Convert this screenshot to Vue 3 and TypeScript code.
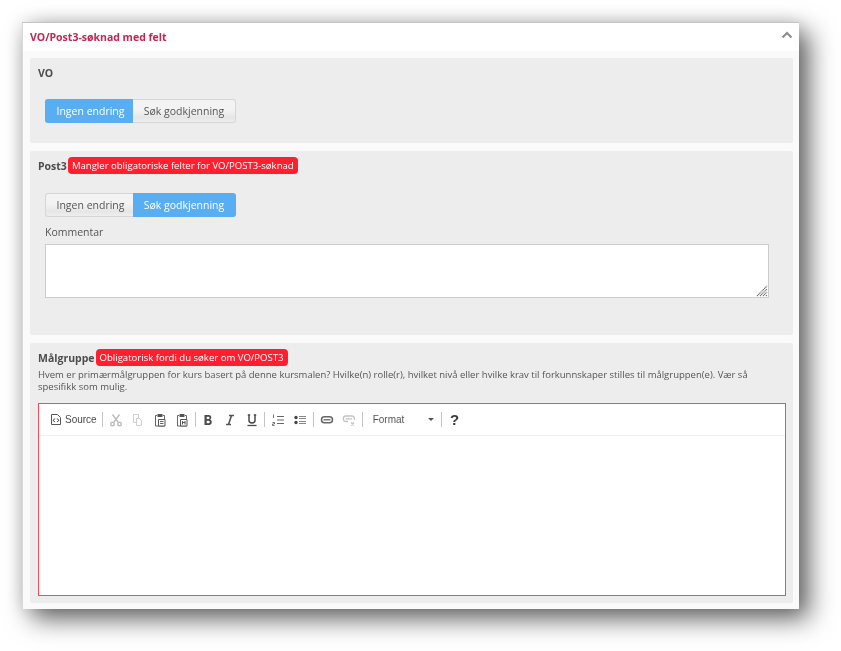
<script setup lang="ts">
const options = ['Ingen endring', 'Søk godkjenning']
</script>

<template>
  <div class="page">
    <div class="window">
      <header class="head">
        <span class="title">VO/Post3-søknad med felt</span>
        <svg class="chev" width="12" height="8" viewBox="0 0 12 8"><path d="M1.500 6.500 6 2l4.500 4.500" fill="none" stroke="#8f8f8f" stroke-width="2.200"/></svg>
      </header>
      <div class="body">
        <section class="sec sec-vo">
          <div class="label-row"><b>VO</b></div>
          <div class="group">
            <button class="btn">{{ options[0] }}</button>
            <button class="btn">{{ options[1] }}</button>
          </div>
        </section>
        <section class="sec sec-post">
          <div class="label-row"><b>Post3</b><span class="badge">Mangler obligatoriske felter for VO/POST3-søknad</span></div>
          <div class="group second">
            <button class="btn off">{{ options[0] }}</button>
            <button class="btn on">{{ options[1] }}</button>
          </div>
          <label class="kom">Kommentar</label>
          <div class="ta">
            <svg class="grip" width="12" height="12" viewBox="0 0 12 12"><path d="M1 11 11 1M4 11l7-7M7 11l4-4M10 11l1-1" stroke="#6a6a6a" stroke-width="1.100" stroke-dasharray="1.200 .5" fill="none"/></svg>
          </div>
        </section>
        <section class="sec sec-mal">
          <div class="label-row"><b>Målgruppe</b><span class="badge">Obligatorisk fordi du søker om VO/POST3</span></div>
          <p class="help">Hvem er primærmålgruppen for kurs basert på denne kursmalen? Hvilke(n) rolle(r), hvilket nivå eller hvilke krav til forkunnskaper stilles til målgruppen(e). Vær så spesifikk som mulig.</p>
          <div class="editor">
            <div class="toolbar">
              <span class="tool src">
                <svg width="12" height="13" viewBox="0 0 12 13"><path d="M1.500 1.500h6l3 3v7h-9z" fill="#fff" stroke="#555"/><path d="M4.800 5.500 3.300 7.300l1.500 1.800M7.200 5.500l1.500 1.800-1.500 1.800" fill="none" stroke="#333"/></svg>
                <span>Source</span>
              </span>
              <i class="sep"></i>
              <span class="tool"><svg width="14" height="14" viewBox="0 0 14 14"><g fill="none" stroke="#bcbcbc" stroke-width="1.400"><path d="M3.500 1.500 9 9M10.500 1.500 5 9"/><circle cx="3.500" cy="11" r="1.800"/><circle cx="10.500" cy="11" r="1.800"/></g></svg></span>
              <span class="tool"><svg width="14" height="14" viewBox="0 0 14 14"><g fill="#fff" stroke="#cfcfcf"><path d="M2.500 1.500h5v8h-5z"/><path d="M5.500 5.500h3l2 2v5h-5z"/></g></svg></span>
              <span class="tool"><svg width="14" height="14" viewBox="0 0 14 14"><path d="M4 2.500H2.500V13h9V2.500H10" fill="#fff" stroke="#666"/><rect x="4.500" y="1" width="5" height="3" fill="#555"/><path d="M5.500 6.500h6.500v6.500H5.500z" fill="#fff" stroke="#555"/><path d="M7 8.500h3.500M7 10.500h3.500" stroke="#666"/></svg></span>
              <span class="tool"><svg width="14" height="14" viewBox="0 0 14 14"><path d="M4 2.500H2.500V13h9V2.500H10" fill="#fff" stroke="#666"/><rect x="4.500" y="1" width="5" height="3" fill="#555"/><path d="M5.500 6.500h6.500v6.500H5.500z" fill="#fff" stroke="#555"/><path d="M7.500 11.500v-3.500M10 11.500v-3.500M7.500 9.500H10" fill="none" stroke="#555"/></svg></span>
              <i class="sep"></i>
              <span class="tool nar"><svg width="14" height="14" viewBox="0 0 14 14"><path d="M3.500 2h4.300c2.800 0 3.300 3.700 1.200 4.600 2.700.8 2.300 5.400-1 5.400H3.500zM5.700 3.800v2.300h1.800c1.400 0 1.400-2.300 0-2.300zM5.700 7.800v2.500h2c1.500 0 1.500-2.500 0-2.500z" fill="#4a4a4a" fill-rule="evenodd"/></svg></span>
              <span class="tool nar"><svg width="14" height="14" viewBox="0 0 14 14"><path d="M6 2.500h5M3 11.500h5M8.500 2.500l-3 9" stroke="#555" stroke-width="1.600" fill="none"/></svg></span>
              <span class="tool nar"><svg width="14" height="14" viewBox="0 0 14 14"><path d="M4 2v5.500c0 3.200 6 3.200 6 0V2M2.800 2h2.400M8.800 2h2.400" stroke="#4a4a4a" stroke-width="1.500" fill="none"/><path d="M2.500 12.500h9" stroke="#4a4a4a" stroke-width="1.300"/></svg></span>
              <i class="sep"></i>
              <span class="tool"><svg width="14" height="14" viewBox="0 0 14 14"><path d="M6 3.500h7M6 7h7M6 10.500h7" stroke="#666" stroke-width="1.100"/><path d="M2.500 1.500v3.500M1.500 9.500h2v1.500h-2v1.500h2" stroke="#555" fill="none" stroke-width=".8"/></svg></span>
              <span class="tool"><svg width="14" height="14" viewBox="0 0 14 14"><path d="M6 3.500h7M6 5.500h7M6 8.500h7M6 10.500h7" stroke="#777" stroke-width=".9"/><circle cx="3" cy="4.500" r="1.700" fill="#444"/><circle cx="3" cy="9.500" r="1.700" fill="#444"/></svg></span>
              <i class="sep"></i>
              <span class="tool nar"><svg width="14" height="14" viewBox="0 0 14 14"><rect x="1.500" y="3.800" width="11" height="6" rx="3" fill="none" stroke="#666" stroke-width="1.500"/><path d="M3.500 6.800h7" stroke="#666" stroke-width="1.300"/></svg></span>
              <span class="tool nar"><svg width="14" height="14" viewBox="0 0 14 14"><g fill="none" stroke="#c4c4c4" stroke-width="1.300"><path d="M6 8.500H4a2.500 2.500 0 0 1 0-5.500h6a2.500 2.500 0 0 1 2 4M3.500 5.800H10"/><path d="M9 9.500l3 3M12 9.500l-3 3"/></g></svg></span>
              <i class="sep"></i>
              <span class="combo"><span>Format</span><i class="caret"></i></span>
              <i class="sep"></i>
              <span class="tool help-q">?</span>
            </div>
          </div>
        </section>
      </div>
    </div>
  </div>
</template>

<style>
html, body { margin: 0; background: #fff; overflow: hidden; }
</style>

<style scoped>
.page {
  width: 841px;
  height: 651px;
  padding: 22px 42px 42px 22px;
  box-sizing: border-box;
  overflow: hidden;
  font-family: "Open Sans", sans-serif;
  color: #555;
  font-size: 10.500px;
}
.window {
  height: 587px;
  background: #fafafa;
  border-top: 1px solid #c4c4c4;
  border-left: 1px solid #d8d8d8;
  box-sizing: border-box;
  box-shadow: 10px 10px 24px rgba(0, 0, 0, .6), 0 0 18px rgba(0, 0, 0, .14);
  filter: blur(.3px);
}
.head {
  height: 28px;
  background: #fff;
  display: flex;
  align-items: center;
  justify-content: space-between;
  padding: 0 6px 1px 7px;
  box-sizing: border-box;
}
.title { color: #c5254f; font-weight: 700; font-size: 10.500px; }
.chev { margin-top: -4px; }
.body { padding: 7px 6px 0 7px; }
.sec {
  background: #ededed;
  border-radius: 2px;
  margin-bottom: 8px;
  padding: 7px 8px;
  box-sizing: border-box;
}
.sec-vo { height: 85px; }
.sec-post { height: 184px; }
.sec-mal { height: 260px; margin-bottom: 0; }
.label-row { display: flex; align-items: center; height: 15px; font-size: 10.500px; color: #4c4c4c; }
.label-row b { font-weight: 700; }
.badge {
  background: #ff1f2e;
  color: #fff;
  border-radius: 4px;
  padding: 0 4px;
  height: 17px;
  line-height: 17px;
  font-size: 9.570px;
  margin-left: 1px;
  white-space: nowrap;
}
.group { display: flex; margin: 19px 0 0 7px; }
.group.second { margin-top: 20px; }
.btn {
  height: 24px;
  font: 10.500px "Open Sans", sans-serif;
  color: #555;
  background: linear-gradient(#f3f3f3, #f3f3f3 45%, #e6e6e6 80%, #eee);
  border: 1px solid #d6d6d6;
  box-sizing: border-box;
  padding: 0;
  cursor: pointer;
}
.btn:first-child { width: 88px; border-radius: 3px 0 0 3px; border-right: 0; padding-left: 2px; }
.btn:last-child { width: 103px; border-radius: 0 3px 3px 0; border-left: 0; }
.group:not(.second) .btn:first-child, .btn.on { background: #58aef0; border-color: #58aef0; color: #fff; }
.kom { display: block; margin: 8px 0 0 7px; height: 19px; line-height: 14px; }
.ta {
  position: relative;
  width: 724px;
  height: 54px;
  margin-left: 7px;
  box-sizing: border-box;
  background: #fff;
  border: 1px solid #ccc;
}
.grip { position: absolute; right: 0; bottom: 0; }
.help { margin: 4px 0 0; font-size: 9.500px; line-height: 12px; color: #555; width: 730px; }
.editor {
  margin: 10px -1px 0 0;
  height: 193px;
  box-sizing: border-box;
  background: #fff;
  border: 1px solid #fb4a55;
}
.toolbar {
  height: 32px;
  border-bottom: 1px solid #f0f0f0;
  display: flex;
  align-items: center;
  padding-left: 11px;
  box-sizing: border-box;
}
.tool { display: flex; align-items: center; justify-content: center; width: 22px; height: 16px; flex: none; }
.tool.nar { width: 21.600px; }
.src { width: auto; gap: 3px; font: 10px "Liberation Sans", Arial, sans-serif; color: #4a4a4a; margin-right: 3px; }
.sep { display: block; width: 1px; height: 15px; background: #c4c4c4; margin: 0 2px; flex: none; }
.combo {
  width: 74px;
  display: flex;
  align-items: center;
  justify-content: space-between;
  padding: 0 5px 0 8px;
  box-sizing: border-box;
  font: 10px "Liberation Sans", Arial, sans-serif;
  color: #555;
  flex: none;
}
.caret { width: 0; height: 0; border: 3px solid transparent; border-top-color: #555; border-bottom: 0; }
.help-q { font: 700 15px "Liberation Sans", Arial, sans-serif; color: #3c3c3c; }
</style>
